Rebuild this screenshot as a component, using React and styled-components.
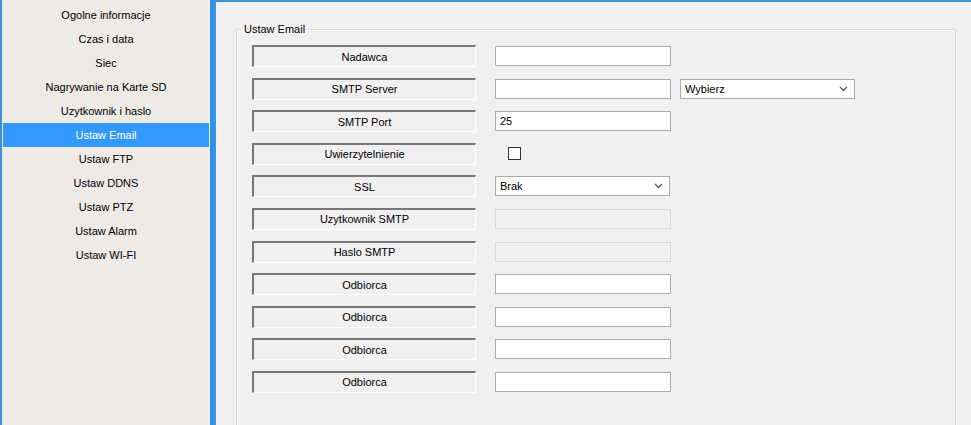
import styled, { createGlobalStyle } from "styled-components";

const GlobalStyle = createGlobalStyle`
  html, body {
    margin: 0;
    padding: 0;
    background: #f0f0f0;
    font-family: "Liberation Sans", Arial, sans-serif;
    font-size: 11px;
    color: #000;
  }
`;

const Page = styled.div`
  display: flex;
  width: 971px;
  height: 425px;
  overflow: hidden;
`;

const Sidebar = styled.nav`
  width: 206px;
  padding: 3px 0 0 1px;
  background: #eeebe6;
  border-left: 2px solid #3c8fd9;
  display: flex;
  flex-direction: column;
`;

const NavItem = styled.div`
  height: 24px;
  line-height: 24px;
  text-align: center;
  background: ${(p) => (p.active ? "#3399ff" : "transparent")};
  color: ${(p) => (p.active ? "#fff" : "#000")};
  cursor: pointer;
`;

const Divider = styled.div`
  width: 6px;
  border-left: 1px solid #f6f6f6;
  background: linear-gradient(to right, #2f8ee0, #3a96e6);
`;

const Main = styled.main`
  flex: 1;
  border-top: 2px solid #3c8fd9;
  padding: 21px 15px 0 20px;
`;

const Group = styled.fieldset`
  margin: 0;
  padding: 10px 0 0 15px;
  height: 420px;
  border: 1px solid #d9d9d9;
  box-shadow: inset 1px 1px 0 #fff;
`;

const Legend = styled.legend`
  padding: 0 3px;
  margin-left: -11px;
  font-size: 11px;
`;

const Form = styled.div`
  display: grid;
  grid-template-columns: 224px 176px 175px;
  column-gap: 19px;
  row-gap: 10.6px;
  align-items: center;
`;

const Label = styled.div`
  grid-column: 1;
  height: 22px;
  box-sizing: border-box;
  display: flex;
  align-items: center;
  justify-content: center;
  background: #f0f0f0;
  border-top: 2px solid #777;
  border-left: 2px solid #777;
  border-right: 1px solid #fff;
  border-bottom: 1px solid #fff;
`;

const Field = styled.div`
  grid-column: 2;
  height: 20px;
  box-sizing: border-box;
  padding-left: 4px;
  display: flex;
  align-items: center;
  background: ${(p) => (p.disabled ? "#f0f0f0" : "#fff")};
  border: 1px solid ${(p) => (p.disabled ? "#d9d9d9" : "#abadb3")};
`;

const Select = styled.div`
  grid-column: ${(p) => p.col || 2};
  justify-self: start;
  width: ${(p) => (p.col === 3 ? "175px" : "175px")};
  margin-left: ${(p) => (p.col === 3 ? "-10px" : "0")};
  height: 20px;
  box-sizing: border-box;
  padding: 0 6px 0 4px;
  display: flex;
  align-items: center;
  justify-content: space-between;
  background: #fff;
  border: 1px solid #acacac;
`;

const CheckCell = styled.div`
  grid-column: 2;
  padding-left: 13px;
`;

const Box = styled.div`
  width: 13px;
  height: 13px;
  box-sizing: border-box;
  border: 1px solid #333;
  background: #fff;
`;

const Chevron = () => (
  <svg width="9" height="6" viewBox="0 0 9 6">
    <path d="M1 1 L4.5 4.5 L8 1" fill="none" stroke="#555" strokeWidth="1.3" />
  </svg>
);

const menu = [
  "Ogolne informacje",
  "Czas i data",
  "Siec",
  "Nagrywanie na Karte SD",
  "Uzytkownik i haslo",
  "Ustaw Email",
  "Ustaw FTP",
  "Ustaw DDNS",
  "Ustaw PTZ",
  "Ustaw Alarm",
  "Ustaw WI-FI",
];

const App = () => {
  return (
    <>
      <GlobalStyle />
      <Page>
        <Sidebar>
          {menu.map((m) => (
            <NavItem key={m} active={m === "Ustaw Email"}>
              {m}
            </NavItem>
          ))}
        </Sidebar>
        <Divider />
        <Main>
          <Group>
            <Legend>Ustaw Email</Legend>
            <Form>
              <Label>Nadawca</Label>
              <Field />

              <Label>SMTP Server</Label>
              <Field />
              <Select col={3}>
                <span>Wybierz</span>
                <Chevron />
              </Select>

              <Label>SMTP Port</Label>
              <Field>25</Field>

              <Label>Uwierzytelnienie</Label>
              <CheckCell>
                <Box />
              </CheckCell>

              <Label>SSL</Label>
              <Select>
                <span>Brak</span>
                <Chevron />
              </Select>

              <Label>Uzytkownik SMTP</Label>
              <Field disabled />

              <Label>Haslo SMTP</Label>
              <Field disabled />

              <Label>Odbiorca</Label>
              <Field />
              <Label>Odbiorca</Label>
              <Field />
              <Label>Odbiorca</Label>
              <Field />
              <Label>Odbiorca</Label>
              <Field />
            </Form>
          </Group>
        </Main>
      </Page>
    </>
  );
};

export default App;
